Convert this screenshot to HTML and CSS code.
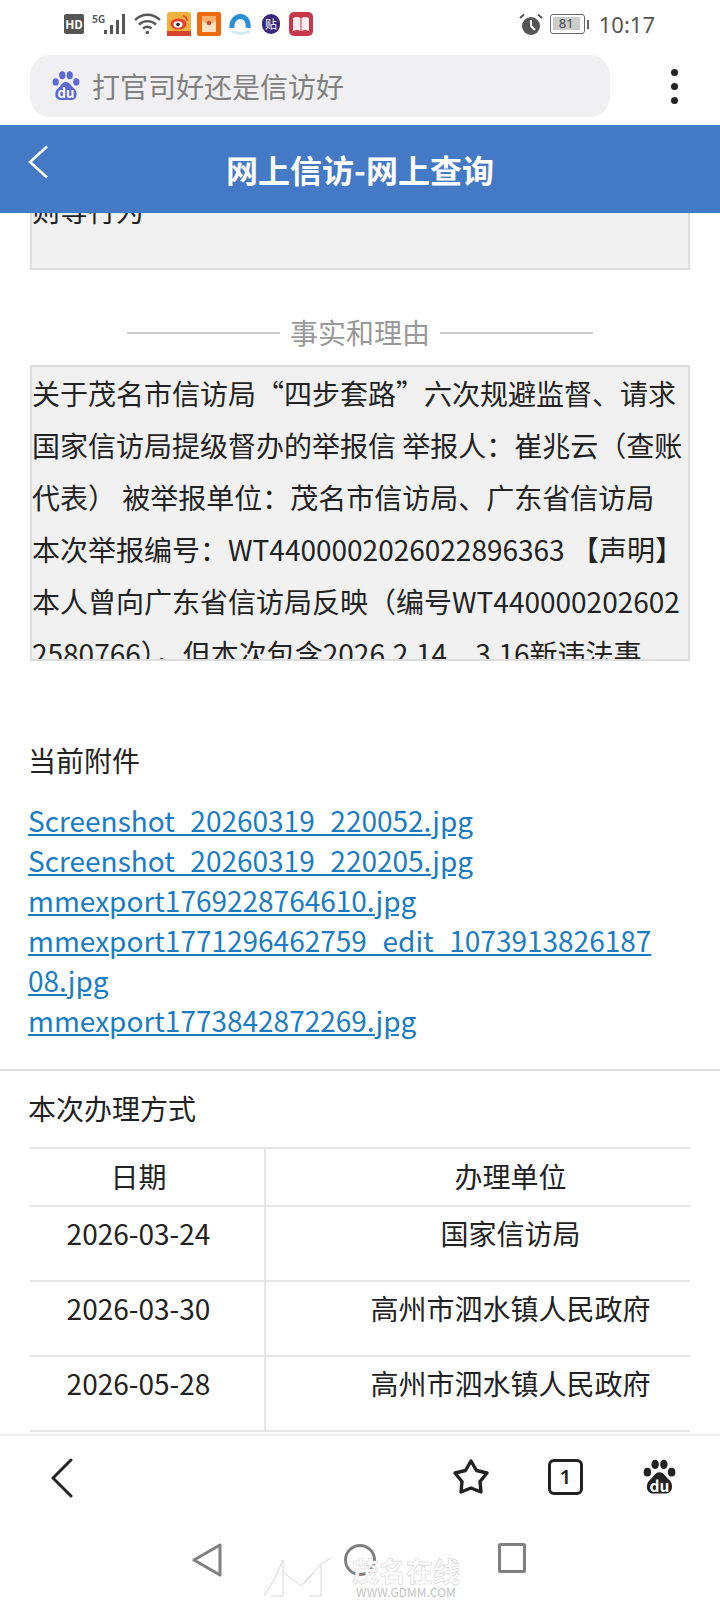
FILE: index.html
```html
<!DOCTYPE html>
<html lang="zh-CN">
  <head>
    <meta charset="UTF-8" />
    <meta name="viewport" content="width=device-width, initial-scale=1.0" />
    <title>网上信访-网上查询</title>
    <link rel="stylesheet" href="styles.css">
  </head>
  <body>
    <div class="phone">
      <div class="status-bar">
        <div class="status-left">
          <span class="hd">HD</span>
          <span class="net">5G</span>
          <svg class="signal" width="23" height="22" viewBox="0 0 23 22">
            <rect x="0" y="17" width="3" height="4" />
            <rect x="6" y="12" width="3" height="9" />
            <rect x="12" y="7" width="3" height="14" />
            <rect x="18" y="1" width="3" height="20" />
          </svg>
          <svg class="wifi" width="27" height="24" viewBox="0 0 27 24" fill="none" stroke="#555" stroke-width="2.4">
            <path d="M1 8C8 1 19 1 26 8" />
            <path d="M5 12.500C10 8 17 8 22 12.500" />
            <path d="M9 16.500C11.500 14.500 15 14.500 17.500 16.500" />
            <circle cx="13.300" cy="20.500" r="1.800" fill="#555" stroke="none" />
          </svg>
          <svg class="app" width="24" height="24" viewBox="0 0 24 24">
            <rect width="24" height="24" rx="3" fill="#f0b23e" />
            <rect y="19" width="24" height="5" fill="#d8442c" />
            <ellipse cx="11.500" cy="12" rx="8" ry="5.500" fill="#e9402a" />
            <ellipse cx="11" cy="12.500" rx="4.500" ry="3.200" fill="#fff" />
            <circle cx="11" cy="12.500" r="1.800" fill="#222" />
            <path d="M16 4Q20 4 20 9" stroke="#e9402a" stroke-width="1.500" fill="none" />
          </svg>
          <svg class="app" width="24" height="24" viewBox="0 0 24 24">
            <rect width="24" height="24" rx="2" fill="#ee6a10" />
            <rect x="5" y="4" width="14" height="16" fill="#fbe3c4" />
            <path d="M5 4H19V9Q12 14 5 9Z" fill="#f6b26a" />
            <circle cx="12" cy="11" r="2.200" fill="#d8442c" />
          </svg>
          <svg class="app" width="22" height="22" viewBox="0 0 22 22" fill="none">
            <path d="M3 15C2 8 7 3 12 3.500C17 4 20 9 19 15" stroke="#2b8fd8" stroke-width="5" />
            <path d="M3 18C8 21 15 21 21 18" stroke="#d5e8f3" stroke-width="3" />
          </svg>
          <span class="tieba">贴</span>
          <svg class="app" width="24" height="24" viewBox="0 0 24 24">
            <rect width="24" height="24" rx="5" fill="#c9374a" />
            <path d="M4 6Q8 4 11.500 6V19Q8 17 4 19ZM12.500 6Q16 4 20 6V19Q16 17 12.500 19Z" fill="#fbeef0" />
          </svg>
        </div>
        <div class="status-right">
          <svg class="alarm" width="24" height="23" viewBox="0 0 24 23">
            <circle cx="12" cy="13" r="9" fill="#555" />
            <path d="M12 7V13L16 17" stroke="#fff" stroke-width="2" fill="none" />
            <path d="M1 5L5 1.500M23 5L19 1.500" stroke="#555" stroke-width="2" />
          </svg>
          <span class="battery"><span class="battery-level">81</span></span>
          <span class="battery-tip"></span>
          <span class="clock">10:17</span>
        </div>
      </div>

      <div class="browser-bar">
        <div class="search-box">
          <svg class="paw" width="28" height="30" viewBox="0 0 34 36">
            <ellipse cx="4.500" cy="13" rx="3.800" ry="4.500" />
            <ellipse cx="12.500" cy="5" rx="3.800" ry="4.800" />
            <ellipse cx="21.500" cy="5" rx="3.800" ry="4.800" />
            <ellipse cx="29.500" cy="13" rx="3.800" ry="4.500" />
            <path d="M17 13C12 13 11 18 7 21C3 24 2 35 11 35H23C32 35 31 24 27 21C23 18 22 13 17 13Z" />
            <text x="17" y="33" text-anchor="middle" class="paw-text">du</text>
          </svg>
          <span class="search-text">打官司好还是信访好</span>
        </div>
        <div class="more-dots"><i></i><i></i><i></i></div>
      </div>

      <header class="page-header">
        <svg class="header-back" width="22" height="34" viewBox="0 0 22 34" fill="none" stroke="#fff" stroke-width="2.600">
          <path d="M20 1.500L3 17L20 32.500" />
        </svg>
        <h1>网上信访-网上查询</h1>
      </header>

      <main class="content">
        <div class="scroller">
          <div class="text-box box-first">则等行为</div>

          <div class="section-title"><span>事实和理由</span></div>

          <div class="text-box box-reason">关于茂名市信访局“四步套路”六次规避监督、请求国家信访局提级督办的举报信 举报人&#xFF1A;崔兆云&#xFF08;查账代表&#xFF09; 被举报单位&#xFF1A;茂名市信访局、广东省信访局 本次举报编号&#xFF1A;WT4400002026022896363 【声明】本人曾向广东省信访局反映&#xFF08;编号WT4400002026022580766&#xFF09;&#xFF0C;但本次包含2026.2.14、3.16新违法事</div>

          <div class="attachments">
            <h2>当前附件</h2>
            <a href="#">Screenshot_20260319_220052.jpg</a>
            <a href="#">Screenshot_20260319_220205.jpg</a>
            <a href="#">mmexport1769228764610.jpg</a>
            <a href="#">mmexport1771296462759_edit_107391382618708.jpg</a>
            <a href="#">mmexport1773842872269.jpg</a>
          </div>

          <div class="handling">
            <h2>本次办理方式</h2>
            <table>
              <thead>
                <tr>
                  <th class="col-date">日期</th>
                  <th class="col-unit">办理单位</th>
                </tr>
              </thead>
              <tbody>
                <tr>
                  <td class="col-date">2026-03-24</td>
                  <td class="col-unit">国家信访局</td>
                </tr>
                <tr>
                  <td class="col-date">2026-03-30</td>
                  <td class="col-unit">高州市泗水镇人民政府</td>
                </tr>
                <tr>
                  <td class="col-date">2026-05-28</td>
                  <td class="col-unit">高州市泗水镇人民政府</td>
                </tr>
              </tbody>
            </table>
          </div>
        </div>
      </main>

      <nav class="browser-nav">
        <svg class="nav-back" width="24" height="40" viewBox="0 0 24 40" fill="none" stroke="#222" stroke-width="3" stroke-linecap="round" stroke-linejoin="round">
          <path d="M21 2L3 20L21 38" />
        </svg>
        <div class="nav-right">
          <svg width="38" height="37" viewBox="0 0 38 37" fill="none" stroke="#222" stroke-width="3.400" stroke-linejoin="round">
            <path d="M19 3L24.500 12.500L35 15L28 23.500L29 34L19 30L9 34L10 23.500L3 15L13.500 12.500Z" />
          </svg>
          <span class="tab-count">1</span>
          <svg class="paw-dark" width="33" height="36" viewBox="0 0 34 36">
            <ellipse cx="4.500" cy="13" rx="3.800" ry="4.500" />
            <ellipse cx="12.500" cy="5" rx="3.800" ry="4.800" />
            <ellipse cx="21.500" cy="5" rx="3.800" ry="4.800" />
            <ellipse cx="29.500" cy="13" rx="3.800" ry="4.500" />
            <path d="M17 13C12 13 11 18 7 21C3 24 2 35 11 35H23C32 35 31 24 27 21C23 18 22 13 17 13Z" />
            <text x="17" y="33" text-anchor="middle" class="paw-text">du</text>
          </svg>
        </div>
      </nav>

      <div class="system-nav">
        <svg width="30" height="34" viewBox="0 0 30 34" fill="none" stroke="#808080" stroke-width="3" stroke-linejoin="round">
          <path d="M28 2V32L2 17Z" />
        </svg>
        <svg width="32" height="34" viewBox="0 0 32 34" fill="none" stroke="#808080" stroke-width="3">
          <circle cx="16" cy="17" r="14.500" />
        </svg>
        <svg width="28" height="30" viewBox="0 0 28 30" fill="none" stroke="#808080" stroke-width="3" stroke-linejoin="round">
          <rect x="1.500" y="1.500" width="25" height="27" rx="1" />
        </svg>
      </div>

      <div class="watermark">
        <svg class="wm-logo" width="73" height="40" viewBox="0 0 73 40" fill="none" stroke="#d8d8d8" stroke-width="1">
          <path d="M1 38L12 20L20 2V38H8M20 14L38 28L58 6V38H46M58 6L68 0M38 28L50 16" />
        </svg>
        <div class="wm-text">
          <span class="wm-name">茂名在线</span>
          <span class="wm-url">WWW.GDMM.COM</span>
        </div>
      </div>
    </div>
  </body>
</html>
```

FILE: styles.css
```css
* {
  box-sizing: border-box;
}

html,
body {
  margin: 0;
  padding: 0;
  background-color: #fff;
}

body {
  font-family: "Noto Sans CJK SC", "Noto Sans", sans-serif;
  color: #222;
}

.phone {
  position: relative;
  width: 720px;
  height: 1600px;
  display: flex;
  flex-direction: column;
  overflow: hidden;
}

/* status bar */
.status-bar {
  height: 48px;
  padding: 12px 65px 0 64px;
  display: flex;
  justify-content: space-between;
  align-items: flex-start;
  flex-shrink: 0;
}

.status-left,
.status-right {
  display: flex;
  align-items: center;
  height: 24px;
}

.hd {
  width: 20px;
  height: 20px;
  background-color: #555;
  border-radius: 2px;
  color: #fff;
  font-size: 12px;
  font-weight: 700;
  line-height: 20px;
  text-align: center;
}

.net {
  margin: -12px 0 0 8px;
  font-size: 10px;
  font-weight: 600;
  color: #555;
  width: 12px;
}

.signal {
  fill: #555;
}

.wifi {
  margin-left: 7px;
}

.app {
  margin-left: 6px;
}

.app + .app + .app {
  margin-left: 8px;
}

.tieba {
  width: 18px;
  height: 20px;
  margin-left: 11px;
  border-radius: 9px;
  background-color: #37277f;
  color: #fff;
  font-size: 12px;
  line-height: 20px;
  text-align: center;
}

.tieba + .app {
  margin-left: 9px;
}

.alarm {
  margin-right: 7px;
}

.battery {
  width: 35px;
  height: 20px;
  padding: 2px;
  border: 1.500px solid #666;
  border-radius: 3px;
}

.battery-level {
  display: block;
  width: 27px;
  height: 13px;
  background-color: #ccc;
  font-family: "Noto Sans", sans-serif;
  font-size: 13px;
  line-height: 13px;
  color: #444;
  text-align: center;
}

.battery-tip {
  width: 2px;
  height: 9px;
  margin-left: 2px;
  background-color: #666;
}

.clock {
  margin-left: 10px;
  font-family: "Noto Sans", sans-serif;
  font-size: 22px;
  color: #555;
  line-height: 24px;
}

/* browser bar */
.browser-bar {
  height: 77px;
  padding: 7px 42px 0 30px;
  display: flex;
  justify-content: space-between;
  flex-shrink: 0;
}

.search-box {
  width: 580px;
  height: 62px;
  padding-left: 22px;
  display: flex;
  align-items: center;
  gap: 12px;
  background-color: #f0f0f3;
  border-radius: 20px;
}

.paw {
  fill: #5a68d8;
}

.search-text {
  font-size: 28px;
  color: #808080;
}

.more-dots {
  height: 62px;
  display: flex;
  flex-direction: column;
  align-items: center;
  justify-content: center;
  gap: 7px;
}

.more-dots i {
  width: 7px;
  height: 7px;
  border-radius: 50%;
  background-color: #222;
}

/* blue header */
.page-header {
  position: relative;
  height: 88px;
  display: flex;
  align-items: center;
  justify-content: center;
  background-color: #4479c5;
  flex-shrink: 0;
}

.page-header h1 {
  margin: 0;
  font-size: 32px;
  font-weight: 700;
  color: #fff;
}

.header-back {
  position: absolute;
  left: 27px;
  top: 20px;
}

/* scrolled page content */
.content {
  height: 1221px;
  overflow: hidden;
  flex-shrink: 0;
}

.scroller {
  margin-top: -23px;
}

.text-box {
  margin: 0 30px;
  padding: 0;
  background-color: #f1f1f2;
  border: 2px solid #ddd;
  font-size: 28px;
  line-height: 52px;
  color: #222;
  overflow: hidden;
  word-break: break-all;
}

.box-first {
  height: 80px;
  border-top: none;
  line-height: 41px;
}

.section-title {
  margin-top: 40px;
  height: 44px;
  display: flex;
  align-items: center;
  justify-content: center;
  gap: 10px;
  font-size: 28px;
  color: #999;
}

.section-title::before,
.section-title::after {
  content: "";
  width: 153px;
  height: 2px;
  margin-top: 2px;
  background-color: #ccc;
}

.box-reason {
  margin-top: 11px;
  height: 296px;
}

.attachments {
  margin-top: 77px;
  padding: 0 60px 29px 28px;
}

h2 {
  margin: 0;
  font-size: 28px;
  font-weight: 400;
  line-height: 44px;
}

.attachments h2 {
  margin-bottom: 18px;
}

.attachments a {
  display: block;
  font-size: 28px;
  line-height: 40px;
  color: #1a7cc4;
  text-decoration: underline;
  word-break: break-all;
}

.handling {
  padding: 15px 30px 0;
  border-top: 2px solid #e2e2e2;
}

.handling h2 {
  margin-left: -2px;
}

table {
  width: 100%;
  margin-top: 17px;
  border-collapse: collapse;
  table-layout: fixed;
  font-size: 28px;
}

th,
td {
  border-top: 2px solid #e5e5e5;
  border-bottom: 2px solid #e5e5e5;
  font-weight: 400;
  text-align: center;
  vertical-align: top;
}

th {
  height: 58px;
  padding-top: 7px;
}

td {
  height: 75px;
  padding-top: 6px;
}

.col-date {
  width: 235px;
  padding-right: 18px;
  border-right: 2px solid #e5e5e5;
}

.col-unit {
  padding-left: 66px;
}

/* browser bottom bar */
.browser-nav {
  height: 86px;
  padding: 22px 44px 0 50px;
  display: flex;
  justify-content: space-between;
  align-items: flex-start;
  border-top: 2px solid #eee;
  flex-shrink: 0;
}

.nav-right {
  display: flex;
  align-items: center;
  gap: 58px;
}

.tab-count {
  width: 35px;
  height: 36px;
  border: 3px solid #222;
  border-radius: 6px;
  font-family: "Noto Sans", sans-serif;
  font-size: 20px;
  font-weight: 600;
  line-height: 30px;
  text-align: center;
}

.paw-dark {
  fill: #222;
  margin-left: 2px;
}

.paw-text {
  fill: #fff;
  font-size: 16px;
  font-weight: 700;
}

/* system navigation */
.system-nav {
  height: 80px;
  padding: 23px 194px 0 192px;
  display: flex;
  justify-content: space-between;
  align-items: flex-start;
  flex-shrink: 0;
}

/* site watermark over the system bar */
.watermark {
  position: absolute;
  left: 263px;
  top: 1556px;
  display: flex;
  align-items: flex-end;
  gap: 16px;
}

.wm-text {
  display: flex;
  flex-direction: column;
  align-items: center;
}

.wm-name {
  font-size: 27px;
  line-height: 30px;
  font-weight: 700;
  color: #fff;
  -webkit-text-stroke: 0.6px #d4d4d4;
}

.wm-url {
  font-size: 12px;
  line-height: 12px;
  color: #c4c4c4;
}
```
